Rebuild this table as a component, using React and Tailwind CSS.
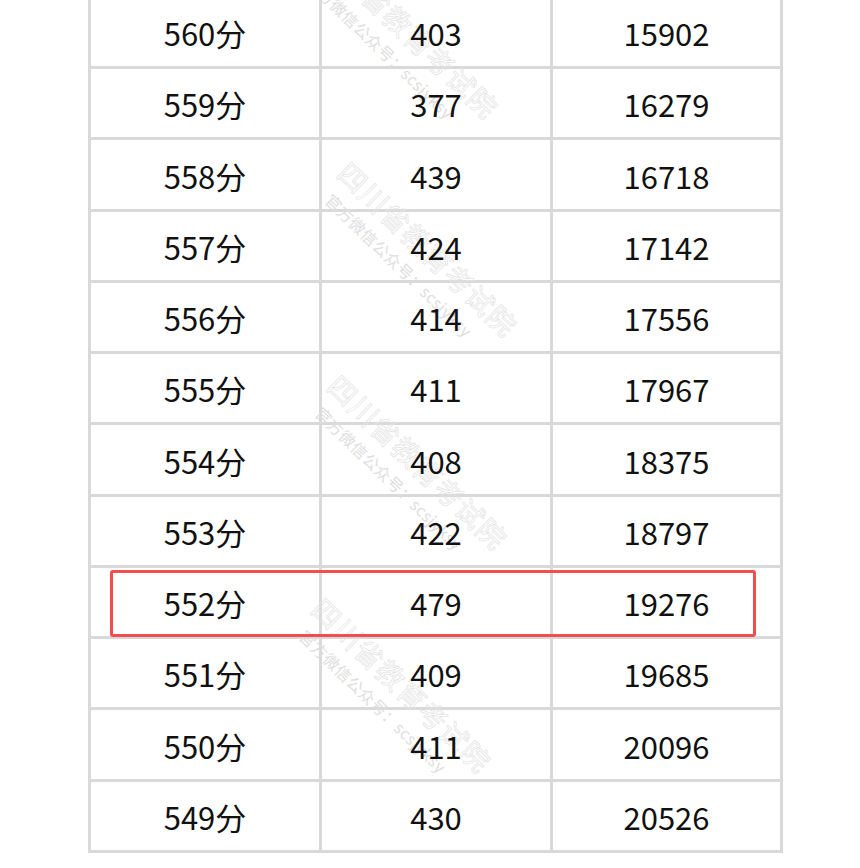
const rows = [
  ["560分", "403", "15902"],
  ["559分", "377", "16279"],
  ["558分", "439", "16718"],
  ["557分", "424", "17142"],
  ["556分", "414", "17556"],
  ["555分", "411", "17967"],
  ["554分", "408", "18375"],
  ["553分", "422", "18797"],
  ["552分", "479", "19276"],
  ["551分", "409", "19685"],
  ["550分", "411", "20096"],
  ["549分", "430", "20526"],
];

// watermark start points (top-left of 四)
const marks = [
  { left: 335, top: -62 },
  { left: 354, top: 156 },
  { left: 344, top: 369 },
  { left: 328, top: 592 },
];

const Watermark = ({ left, top }) => (
  <div
    className="absolute origin-top-left rotate-[44deg] pointer-events-none select-none whitespace-nowrap"
    style={{ left, top }}
  >
    <div className="text-[28px] leading-[30px] tracking-[1.5px] text-transparent [-webkit-text-stroke:0.7px_#e3e3e3]">
      四川省教育考试院
    </div>
    <div className="ml-[10px] mt-[8px] text-[16px] leading-[18px] tracking-[0.5px] text-[#dedede]">
      官方微信公众号：scsjyksy
    </div>
  </div>
);

export default function App() {
  return (
    <div className="relative w-[860px] h-[868px] overflow-hidden bg-white font-['Noto_Sans_CJK_SC','Noto_Sans',sans-serif]">
      <div className="ml-[88px] -mt-[5.3px] w-[695px] bg-[#d9d9d9] p-[3px]">
        <div className="grid grid-cols-[228px_228px_227px] gap-[3px]">
          {rows.map((r) =>
            r.map((c, i) => (
              <div
                key={r[0] + i}
                className="h-[68.27px] bg-white flex items-center justify-center pt-[3px] text-[31px] text-[#111]"
              >
                <span className="relative z-10">{c}</span>
              </div>
            ))
          )}
        </div>
      </div>

      {marks.map((m, i) => (
        <Watermark key={i} {...m} />
      ))}

      {/* highlight on 552 */}
      <div className="absolute left-[110px] top-[570px] w-[646px] h-[67px] border-[3px] border-[#f24e4e] rounded-[3px]" />
    </div>
  );
}
